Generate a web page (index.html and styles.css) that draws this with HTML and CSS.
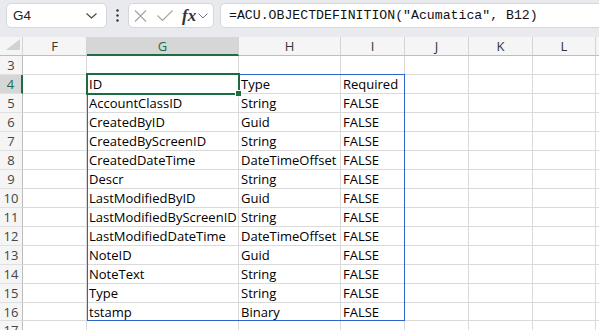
FILE: index.html
```html
<!DOCTYPE html>
<html lang="en">
<head>
    <meta charset="UTF-8">
    <meta name="viewport" content="width=device-width, initial-scale=1.0">
    <title>Sheet</title>
    <link rel="stylesheet" href="styles.css">
</head>
<body>
    <div class="toolbar">
        <div class="namebox">
            <span>G4</span>
            <svg width="11" height="6" viewBox="0 0 11 6"><path d="M0.5 0.5 L5.5 5 L10.5 0.5" fill="none" stroke="#444" stroke-width="1.1"/></svg>
        </div>
        <div class="dots">
            <svg width="3" height="13" viewBox="0 0 3 13"><circle cx="1.5" cy="1.5" r="1.2" fill="#333"/><circle cx="1.5" cy="6.5" r="1.2" fill="#333"/><circle cx="1.5" cy="11.5" r="1.2" fill="#333"/></svg>
        </div>
        <div class="fxbox">
            <svg class="cancel" width="13" height="12" viewBox="0 0 13 12"><path d="M1 0.5 L12 11.5 M12 0.5 L1 11.5" stroke="#a3a3a3" stroke-width="1.1"/></svg>
            <svg class="enter" width="16" height="11" viewBox="0 0 16 11"><path d="M0.5 5.5 L5.5 10.5 L15.5 0.5" fill="none" stroke="#a3a3a3" stroke-width="1.1"/></svg>
            <span class="fx">fx</span>
            <svg width="10" height="6" viewBox="0 0 10 6"><path d="M0.5 0.5 L5 5 L9.5 0.5" fill="none" stroke="#777" stroke-width="1"/></svg>
        </div>
        <div class="formula">=ACU.OBJECTDEFINITION("Acumatica", B12)</div>
    </div>

    <div class="sheet" id="sheet">
        <div class="row head" id="head">
            <div class="cell corner">
                <svg width="23" height="18" viewBox="0 0 23 18"><polygon points="20,2 20,13 6,13" fill="#d2d2d2"/></svg>
            </div>
        </div>
        <!-- rows are added by the script -->
        <div class="range"></div>
        <div class="active"><span class="handle"></span></div>
    </div>

    <script>
        const sheet = document.getElementById("sheet");
        const head = document.getElementById("head");
        const letters = ["F", "G", "H", "I", "J", "K", "L", ""];

        letters.forEach(function (letter) {
            const cell = document.createElement("div");
            cell.className = "cell" + (letter === "G" ? " sel" : "");
            cell.textContent = letter;
            head.appendChild(cell);
        });

        const fields = [
            ["ID", "Type", "Required"],
            ["AccountClassID", "String", "FALSE"],
            ["CreatedByID", "Guid", "FALSE"],
            ["CreatedByScreenID", "String", "FALSE"],
            ["CreatedDateTime", "DateTimeOffset", "FALSE"],
            ["Descr", "String", "FALSE"],
            ["LastModifiedByID", "Guid", "FALSE"],
            ["LastModifiedByScreenID", "String", "FALSE"],
            ["LastModifiedDateTime", "DateTimeOffset", "FALSE"],
            ["NoteID", "Guid", "FALSE"],
            ["NoteText", "String", "FALSE"],
            ["Type", "String", "FALSE"],
            ["tstamp", "Binary", "FALSE"]
        ];

        const range = sheet.querySelector(".range");

        for (let r = 3; r <= 17; r++) {
            const row = document.createElement("div");
            row.className = "row" + (r === 16 ? " short" : "");

            const num = document.createElement("div");
            num.className = "cell rh" + (r === 4 ? " sel" : "");
            num.textContent = r;
            row.appendChild(num);

            const values = fields[r - 4] || [];
            const cols = ["", values[0], values[1], values[2], "", "", "", ""];
            cols.forEach(function (value) {
                const cell = document.createElement("div");
                cell.className = "cell";
                cell.textContent = value || "";
                row.appendChild(cell);
            });

            sheet.insertBefore(row, range);
        }
    </script>
</body>
</html>
```

FILE: styles.css
```css
body {
    margin: 0;
    width: 599px;
    height: 330px;
    overflow: hidden;
    background: #fff;
    font-family: "Open Sans", "Liberation Sans", sans-serif;
}
.toolbar {
    display: flex;
    align-items: flex-start;
    height: 37px;
    box-sizing: border-box;
    padding: 3px 0 0 6px;
    background: #e8eaed;
}
.namebox {
    width: 101px;
    height: 25px;
    box-sizing: border-box;
    display: flex;
    align-items: center;
    justify-content: space-between;
    padding: 0 9px 0 6px;
    background: #fff;
    border: 1px solid #d5d7db;
    border-radius: 5px;
    font-family: "Liberation Sans", sans-serif;
    font-size: 13.5px;
    color: #222;
}
.dots {
    width: 21px;
    height: 25px;
    display: flex;
    align-items: center;
    justify-content: center;
}
.fxbox {
    width: 86px;
    height: 25px;
    box-sizing: border-box;
    display: flex;
    align-items: center;
    padding-left: 5px;
    background: #fff;
    border: 1px solid #d5d7db;
    border-radius: 5px;
}
.fxbox .enter {
    margin-left: 10px;
}
.fx {
    margin-left: 9px;
    margin-right: 2px;
    font-family: "Liberation Serif", serif;
    font-style: italic;
    font-weight: bold;
    font-size: 17px;
    line-height: 20px;
    color: #333;
}
.formula {
    flex: 1;
    height: 25px;
    box-sizing: border-box;
    margin-left: 6px;
    margin-right: -10px;
    padding-left: 8px;
    background: #fff;
    border: 1px solid #d5d7db;
    border-radius: 5px;
    font-family: "Liberation Mono", monospace;
    font-size: 13.2px;
    line-height: 23px;
    color: #111;
    white-space: nowrap;
}
.sheet {
    position: relative;
}
.row {
    display: grid;
    grid-template-columns: 23px 64px 152px 102px 64px 64px 64px 63px 1fr;
    height: 19px;
}
.row.short {
    height: 18px;
}
.cell {
    box-sizing: border-box;
    padding: 0 2px;
    border-right: 1px solid #dadada;
    border-bottom: 1px solid #dadada;
    font-size: 13px;
    line-height: 19px;
    color: #000;
    white-space: nowrap;
    overflow: hidden;
}
.head .cell {
    background: #f5f5f5;
    text-align: center;
    color: #333;
    border-right-color: #d4d4d4;
    border-bottom-color: #bdbdbd;
}
.head .corner {
    padding: 0;
}
.head .sel {
    background: #d6d6d6;
    color: #1e6c41;
    border-bottom: 2px solid #1e6c41;
}
.rh {
    background: #f5f5f5;
    text-align: center;
    color: #444;
    border-right-color: #bdbdbd;
    border-bottom-color: #e0e0e0;
}
.rh.sel {
    background: #d6d6d6;
    color: #1e6c41;
    border-right: 2px solid #1e6c41;
}
.range {
    position: absolute;
    left: 87px;
    top: 37px;
    width: 318px;
    height: 247px;
    box-sizing: border-box;
    border: 1px solid #2f62c9;
}
.active {
    position: absolute;
    left: 86px;
    top: 36px;
    width: 154px;
    height: 22px;
    box-sizing: border-box;
    border: 2px solid #1e6c41;
}
.handle {
    position: absolute;
    right: -3px;
    bottom: -3px;
    width: 5px;
    height: 5px;
    background: #1e6c41;
    box-shadow: 0 0 0 1px #fff;
}
```
